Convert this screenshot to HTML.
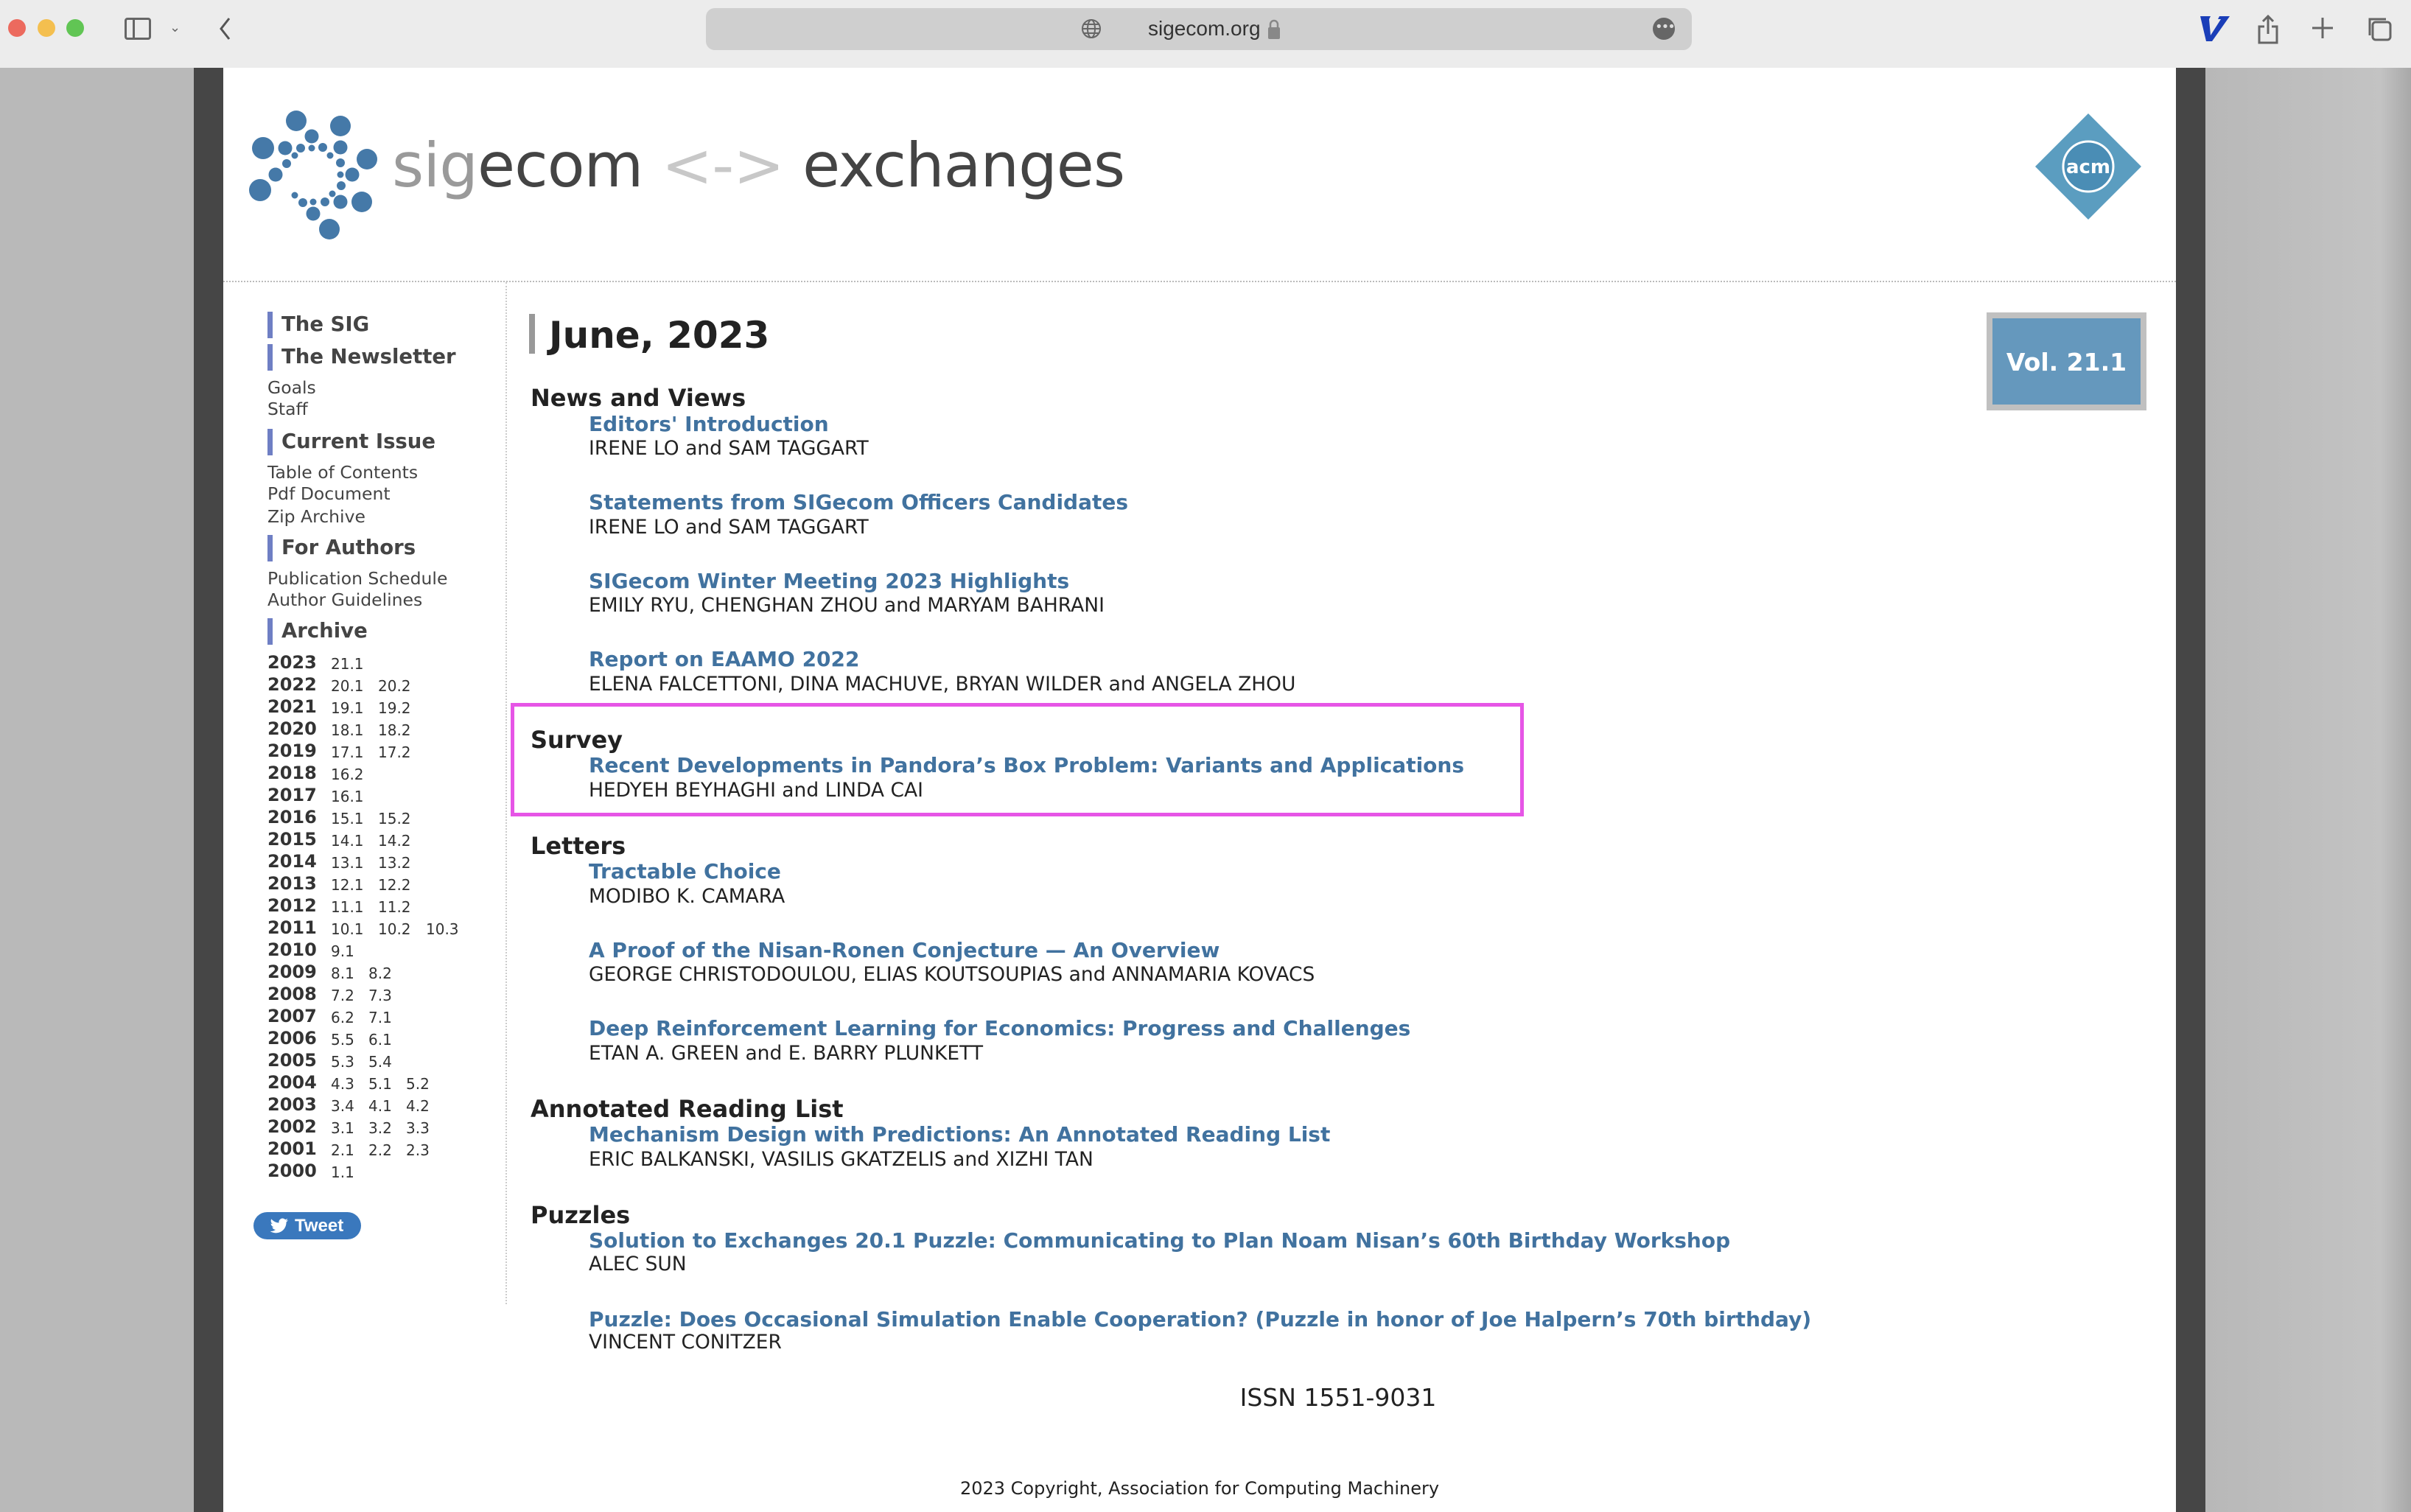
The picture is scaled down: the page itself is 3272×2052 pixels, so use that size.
<!DOCTYPE html>
<html><head><meta charset="utf-8">
<style>
*{margin:0;padding:0;box-sizing:border-box}
body{width:3272px;height:2052px;position:relative;overflow:hidden;background:#ececec;font-family:"DejaVu Sans","Liberation Sans",sans-serif}
.a{position:absolute;white-space:nowrap;line-height:40px;height:40px}
.h{font-weight:bold;font-size:32px;color:#222;left:720px}
.l{font-weight:bold;font-size:28px;color:#41729f;left:799px}
.au{font-size:26.5px;color:#222;left:799px}
.sh{font-weight:bold;font-size:27.5px;color:#444;left:382px}
.bar{position:absolute;left:363px;width:7px;height:36px;background:#6f7fc4}
.sl{font-size:23.5px;color:#444;left:363px}
.y{font-weight:bold;font-size:24px;color:#333;left:363px}
.v{font-size:20px;color:#333}
</style></head><body>
<!-- toolbar -->
<div style="position:absolute;left:0;top:0;width:3272px;height:92px;background:#ececec"></div>
<div style="position:absolute;left:11px;top:26px;width:24px;height:24px;border-radius:50%;background:#ec6a5e"></div>
<div style="position:absolute;left:51px;top:26px;width:24px;height:24px;border-radius:50%;background:#f4bf4f"></div>
<div style="position:absolute;left:90px;top:26px;width:24px;height:24px;border-radius:50%;background:#61c554"></div>
<div style="position:absolute;left:169px;top:24px;width:36px;height:30px;border:3px solid #666;border-radius:4px"></div>
<div style="position:absolute;left:180px;top:24px;width:3px;height:30px;background:#666"></div>
<div class="a" style="left:230px;top:18px;font-size:18px;color:#666">⌄</div>
<svg style="position:absolute;left:295px;top:22px" width="20" height="34"><path d="M16 3 L5 17 L16 31" stroke="#555" stroke-width="3" fill="none"/></svg>
<div style="position:absolute;left:958px;top:11px;width:1338px;height:57px;background:#cfcfcf;border-radius:12px"></div>
<svg style="position:absolute;left:1467px;top:25px" width="28" height="28"><circle cx="14" cy="14" r="12" fill="none" stroke="#666" stroke-width="2"/><ellipse cx="14" cy="14" rx="5" ry="12" fill="none" stroke="#666" stroke-width="2"/><path d="M2 14H26M4 8H24M4 20H24" stroke="#666" stroke-width="2"/></svg>
<div class="a" style="left:1558px;top:19px;font-size:28px;color:#333;font-family:'Liberation Sans',sans-serif">sigecom.org</div>
<svg style="position:absolute;left:1720px;top:24px" width="18" height="30"><path d="M4 14V9a5 5 0 0 1 10 0v5" stroke="#888" stroke-width="2.5" fill="none"/><rect x="1" y="13" width="16" height="16" rx="2" fill="#888"/></svg>
<div style="position:absolute;left:2243px;top:24px;width:30px;height:30px;border-radius:50%;background:#666"></div>
<div class="a" style="left:2246px;top:17px;font-size:18px;color:#ddd;letter-spacing:-2px">•••</div>
<svg style="position:absolute;left:2984px;top:18px" width="44" height="40"><path d="M2 4H16L14 8L16 30L30 8H26L28 4H42L18 38H10Z" fill="#1a3eb8"/></svg>
<svg style="position:absolute;left:3062px;top:18px" width="32" height="44"><path d="M16 4V28M9 11L16 4L23 11M11 18H4V40H28V18H21" stroke="#666" stroke-width="3" fill="none"/></svg>
<svg style="position:absolute;left:3136px;top:22px" width="32" height="32"><path d="M16 2V30M2 16H30" stroke="#666" stroke-width="3"/></svg>
<svg style="position:absolute;left:3210px;top:20px" width="36" height="36"><rect x="10" y="10" width="24" height="24" rx="4" fill="none" stroke="#666" stroke-width="3"/><path d="M6 28V6H28" stroke="#666" stroke-width="3" fill="none"/></svg>
<!-- page frame -->
<div style="position:absolute;left:0;top:92px;width:263px;height:1960px;background:#b9b9b9"></div>
<div style="position:absolute;left:263px;top:92px;width:40px;height:1960px;background:#464646"></div>
<div style="position:absolute;left:303px;top:92px;width:2650px;height:1960px;background:#fff"></div>
<div style="position:absolute;left:2953px;top:92px;width:40px;height:1960px;background:#464646"></div>
<div style="position:absolute;left:2993px;top:92px;width:279px;height:1960px;background:linear-gradient(90deg,#b8b8b8,#c3c3c3 85%,#a8a8a8)"></div>
<div style="position:absolute;left:303px;top:381px;width:2650px;border-top:2px dotted #bbb"></div>
<div style="position:absolute;left:686px;top:383px;height:1387px;border-left:2px dotted #ccc"></div>
<!-- logo -->
<svg style="position:absolute;left:320px;top:130px" width="220" height="220" viewBox="320 130 220 220" fill="#4579a8">
<circle cx="402" cy="164" r="14"/><circle cx="462" cy="171" r="14"/><circle cx="357" cy="201" r="15"/><circle cx="498" cy="216" r="14"/><circle cx="353" cy="258" r="15"/><circle cx="491" cy="274" r="14"/><circle cx="447" cy="311" r="14"/>
<circle cx="423" cy="185" r="9.5"/><circle cx="387" cy="201" r="9.5"/><circle cx="462" cy="200" r="9.5"/><circle cx="374" cy="237" r="9.5"/><circle cx="478" cy="237" r="9.5"/><circle cx="462" cy="274" r="9.5"/><circle cx="425" cy="290" r="9.5"/>
<circle cx="408" cy="201" r="6"/><circle cx="438" cy="200" r="6"/><circle cx="400" cy="211" r="4.5"/><circle cx="448" cy="211" r="4.5"/><circle cx="389" cy="222" r="6"/><circle cx="462" cy="221" r="6"/><circle cx="462" cy="237" r="4.5"/><circle cx="463" cy="252" r="6"/><circle cx="400" cy="265" r="4.5"/><circle cx="411" cy="275" r="6"/><circle cx="441" cy="274" r="6"/><circle cx="425" cy="274" r="4.5"/><circle cx="451" cy="263" r="4.5"/><circle cx="423" cy="201" r="4.5"/>
</svg>
<div class="a" style="left:532px;top:175px;height:100px;line-height:100px;font-size:83px;color:#444;font-family:'DejaVu Sans',sans-serif;letter-spacing:-1px"><span style="color:#9a9a9a">sig</span>ecom <span style="color:#c8c8c8">&lt;-&gt;</span> exchanges</div>
<!-- acm -->
<svg style="position:absolute;left:2760px;top:152px" width="148" height="148"><path d="M74 2L146 74L74 146L2 74Z" fill="#5b9dc0"/><circle cx="74" cy="74" r="34" fill="#4a8db5" stroke="#fff" stroke-width="3"/><text x="74" y="83" text-anchor="middle" font-family="DejaVu Sans" font-weight="bold" font-size="26" fill="#fff">acm</text></svg>
<!-- vol -->
<div style="position:absolute;left:2696px;top:424px;width:217px;height:133px;background:#6598bd;border:8px solid #c0c0c0"></div>
<div class="a" style="left:2696px;top:472px;width:217px;text-align:center;font-weight:bold;font-size:33px;color:#fff">Vol. 21.1</div>
<!-- sidebar -->
<div class="bar" style="top:423px"></div><div class="a sh" style="top:420px">The SIG</div>
<div class="bar" style="top:467px"></div><div class="a sh" style="top:464px">The Newsletter</div>
<div class="a sl" style="top:506px">Goals</div>
<div class="a sl" style="top:535px">Staff</div>
<div class="bar" style="top:582px"></div><div class="a sh" style="top:579px">Current Issue</div>
<div class="a sl" style="top:621px">Table of Contents</div>
<div class="a sl" style="top:650px">Pdf Document</div>
<div class="a sl" style="top:681px">Zip Archive</div>
<div class="bar" style="top:726px"></div><div class="a sh" style="top:723px">For Authors</div>
<div class="a sl" style="top:765px">Publication Schedule</div>
<div class="a sl" style="top:794px">Author Guidelines</div>
<div class="bar" style="top:839px"></div><div class="a sh" style="top:836px">Archive</div>
<div class="a y" style="top:879px">2023</div><div class="a v" style="top:881px;left:449px">21.1</div>
<div class="a y" style="top:909px">2022</div><div class="a v" style="top:911px;left:449px">20.1</div><div class="a v" style="top:911px;left:513px">20.2</div>
<div class="a y" style="top:939px">2021</div><div class="a v" style="top:941px;left:449px">19.1</div><div class="a v" style="top:941px;left:513px">19.2</div>
<div class="a y" style="top:969px">2020</div><div class="a v" style="top:971px;left:449px">18.1</div><div class="a v" style="top:971px;left:513px">18.2</div>
<div class="a y" style="top:999px">2019</div><div class="a v" style="top:1001px;left:449px">17.1</div><div class="a v" style="top:1001px;left:513px">17.2</div>
<div class="a y" style="top:1029px">2018</div><div class="a v" style="top:1031px;left:449px">16.2</div>
<div class="a y" style="top:1059px">2017</div><div class="a v" style="top:1061px;left:449px">16.1</div>
<div class="a y" style="top:1089px">2016</div><div class="a v" style="top:1091px;left:449px">15.1</div><div class="a v" style="top:1091px;left:513px">15.2</div>
<div class="a y" style="top:1119px">2015</div><div class="a v" style="top:1121px;left:449px">14.1</div><div class="a v" style="top:1121px;left:513px">14.2</div>
<div class="a y" style="top:1149px">2014</div><div class="a v" style="top:1151px;left:449px">13.1</div><div class="a v" style="top:1151px;left:513px">13.2</div>
<div class="a y" style="top:1179px">2013</div><div class="a v" style="top:1181px;left:449px">12.1</div><div class="a v" style="top:1181px;left:513px">12.2</div>
<div class="a y" style="top:1209px">2012</div><div class="a v" style="top:1211px;left:449px">11.1</div><div class="a v" style="top:1211px;left:513px">11.2</div>
<div class="a y" style="top:1239px">2011</div><div class="a v" style="top:1241px;left:449px">10.1</div><div class="a v" style="top:1241px;left:513px">10.2</div><div class="a v" style="top:1241px;left:578px">10.3</div>
<div class="a y" style="top:1269px">2010</div><div class="a v" style="top:1271px;left:449px">9.1</div>
<div class="a y" style="top:1299px">2009</div><div class="a v" style="top:1301px;left:449px">8.1</div><div class="a v" style="top:1301px;left:500px">8.2</div>
<div class="a y" style="top:1329px">2008</div><div class="a v" style="top:1331px;left:449px">7.2</div><div class="a v" style="top:1331px;left:500px">7.3</div>
<div class="a y" style="top:1359px">2007</div><div class="a v" style="top:1361px;left:449px">6.2</div><div class="a v" style="top:1361px;left:500px">7.1</div>
<div class="a y" style="top:1389px">2006</div><div class="a v" style="top:1391px;left:449px">5.5</div><div class="a v" style="top:1391px;left:500px">6.1</div>
<div class="a y" style="top:1419px">2005</div><div class="a v" style="top:1421px;left:449px">5.3</div><div class="a v" style="top:1421px;left:500px">5.4</div>
<div class="a y" style="top:1449px">2004</div><div class="a v" style="top:1451px;left:449px">4.3</div><div class="a v" style="top:1451px;left:500px">5.1</div><div class="a v" style="top:1451px;left:551px">5.2</div>
<div class="a y" style="top:1479px">2003</div><div class="a v" style="top:1481px;left:449px">3.4</div><div class="a v" style="top:1481px;left:500px">4.1</div><div class="a v" style="top:1481px;left:551px">4.2</div>
<div class="a y" style="top:1509px">2002</div><div class="a v" style="top:1511px;left:449px">3.1</div><div class="a v" style="top:1511px;left:500px">3.2</div><div class="a v" style="top:1511px;left:551px">3.3</div>
<div class="a y" style="top:1539px">2001</div><div class="a v" style="top:1541px;left:449px">2.1</div><div class="a v" style="top:1541px;left:500px">2.2</div><div class="a v" style="top:1541px;left:551px">2.3</div>
<div class="a y" style="top:1569px">2000</div><div class="a v" style="top:1571px;left:449px">1.1</div>
<div style="position:absolute;left:344px;top:1645px;width:146px;height:37px;border-radius:19px;background:#3a78bd"></div>
<svg style="position:absolute;left:366px;top:1653px" width="26" height="22" viewBox="0 0 24 20"><path d="M23 2.5c-.8.4-1.7.6-2.6.7.9-.6 1.6-1.4 2-2.5-.9.5-1.9.9-2.9 1.1C18.6.9 17.4.3 16.1.3c-2.5 0-4.6 2.1-4.6 4.6 0 .4 0 .7.1 1C7.8 5.7 4.4 3.9 2.1 1.1c-.4.7-.6 1.5-.6 2.3 0 1.6.8 3 2.1 3.8-.8 0-1.5-.2-2.1-.6v.1c0 2.2 1.6 4.1 3.7 4.5-.4.1-.8.2-1.2.2-.3 0-.6 0-.9-.1.6 1.8 2.3 3.2 4.3 3.2-1.6 1.2-3.6 2-5.7 2H.6c2 1.3 4.5 2.1 7.1 2.1 8.5 0 13.1-7 13.1-13.1v-.6c.9-.6 1.6-1.4 2.2-2.4z" fill="#fff"/></svg>
<div class="a" style="left:400px;top:1644px;font-size:24px;font-weight:bold;color:#fff;font-family:'Liberation Sans',sans-serif">Tweet</div>
<!-- main -->
<div style="position:absolute;left:718px;top:426px;width:8px;height:54px;background:#999"></div>
<div class="a" style="left:745px;top:428px;height:54px;line-height:54px;font-size:50px;font-weight:bold;color:#222">June, 2023</div>
<div class="a h" style="top:520px">News and Views</div>
<div class="a l" style="top:556px">Editors' Introduction</div>
<div class="a au" style="top:589px">IRENE LO and SAM TAGGART</div>
<div class="a l" style="top:662px">Statements from SIGecom Officers Candidates</div>
<div class="a au" style="top:696px">IRENE LO and SAM TAGGART</div>
<div class="a l" style="top:769px">SIGecom Winter Meeting 2023 Highlights</div>
<div class="a au" style="top:802px">EMILY RYU, CHENGHAN ZHOU and MARYAM BAHRANI</div>
<div class="a l" style="top:875px">Report on EAAMO 2022</div>
<div class="a au" style="top:909px">ELENA FALCETTONI, DINA MACHUVE, BRYAN WILDER and ANGELA ZHOU</div>
<div style="position:absolute;left:693px;top:954px;width:1375px;height:154px;border:5px solid #e655e6"></div>
<div class="a h" style="top:984px">Survey</div>
<div class="a l" style="top:1019px">Recent Developments in Pandora’s Box Problem: Variants and Applications</div>
<div class="a au" style="top:1053px">HEDYEH BEYHAGHI and LINDA CAI</div>
<div class="a h" style="top:1128px">Letters</div>
<div class="a l" style="top:1163px">Tractable Choice</div>
<div class="a au" style="top:1197px">MODIBO K. CAMARA</div>
<div class="a l" style="top:1270px">A Proof of the Nisan-Ronen Conjecture — An Overview</div>
<div class="a au" style="top:1303px">GEORGE CHRISTODOULOU, ELIAS KOUTSOUPIAS and ANNAMARIA KOVACS</div>
<div class="a l" style="top:1376px">Deep Reinforcement Learning for Economics: Progress and Challenges</div>
<div class="a au" style="top:1410px">ETAN A. GREEN and E. BARRY PLUNKETT</div>
<div class="a h" style="top:1485px">Annotated Reading List</div>
<div class="a l" style="top:1520px">Mechanism Design with Predictions: An Annotated Reading List</div>
<div class="a au" style="top:1554px">ERIC BALKANSKI, VASILIS GKATZELIS and XIZHI TAN</div>
<div class="a h" style="top:1629px">Puzzles</div>
<div class="a l" style="top:1664px">Solution to Exchanges 20.1 Puzzle: Communicating to Plan Noam Nisan’s 60th Birthday Workshop</div>
<div class="a au" style="top:1696px">ALEC SUN</div>
<div class="a l" style="top:1771px">Puzzle: Does Occasional Simulation Enable Cooperation? (Puzzle in honor of Joe Halpern’s 70th birthday)</div>
<div class="a au" style="top:1802px">VINCENT CONITZER</div>
<div class="a" style="left:1416px;width:800px;text-align:center;top:1877px;font-size:33px;color:#222">ISSN 1551-9031</div>
<div class="a" style="text-align:center;top:2000px;font-size:24px;color:#222;left:528px;width:2200px">2023 Copyright, Association for Computing Machinery</div>
</body></html>
